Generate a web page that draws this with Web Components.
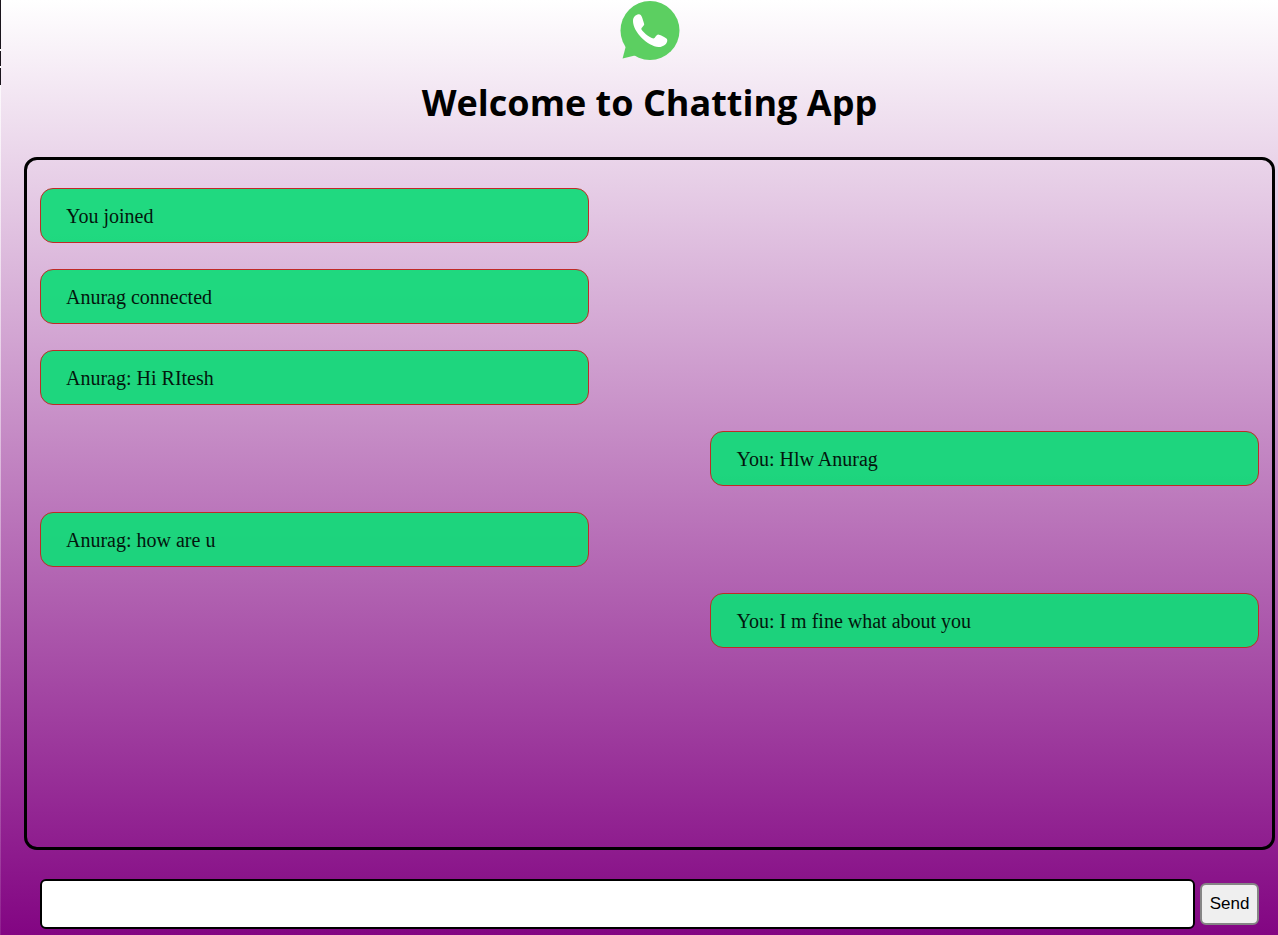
<!DOCTYPE html>
<html lang="en">
<head>
<meta charset="utf-8">
<title>Chatting App</title>
<style>
html { height: 100%; background: linear-gradient(#fff, #800080 102%) no-repeat; }
body { margin: 0; height: 100%; font-family: "Liberation Serif", serif; color: #000; }
</style>
</head>
<body>
<chat-app></chat-app>
<script>
const define = (name, markup, setup) => {
  const template = document.createElement('template');
  template.innerHTML = markup;
  customElements.define(name, class extends HTMLElement {
    constructor() {
      super();
      this.attachShadow({ mode: 'open' }).append(template.content.cloneNode(true));
      if (setup) setup(this.shadowRoot);
    }
  });
};

define('chat-header', `
<style>
:host { display: flex; flex-direction: column; align-items: center; }
svg { display: block; width: 60px; height: 60px; }
h1 { margin: 16px 0 0; font: bold 36px/54px "Open Sans", "Noto Sans", sans-serif; }
</style>
<svg viewBox="0 0 60 60" role="img" aria-label="Chat logo">
  <circle cx="30" cy="30.500" r="29.500" fill="#5ccf61"/>
  <path fill="#5ccf61" d="M2.600 58.500 6.400 44 17 55Z"/>
  <path fill="#fff" d="M13 21C13 17 15.800 14.500 18.500 14.200C20.500 14 21.500 15.500 22.300 18L24.200 24C24.600 25.500 21.300 27.500 21.300 29C21.300 30.500 29.500 38.300 33.500 38.400C35 38.400 36.200 34.400 38.200 34.400C39.500 34.400 46 37.700 47 38.900C48.500 42.700 44 47 38.500 47C28 46.500 13 32 13 21Z"/>
</svg>
<h1>Welcome to Chatting App</h1>`);

define('chat-message', `
<style>
:host {
  display: block; box-sizing: border-box; width: 45%; padding: 16px 25px 15px;
  border: 1px solid #c02a26; border-radius: 13px;
  background: rgba(19, 218, 121, .94); color: #03160d;
  font-size: 20px; line-height: 22px;
}
:host([side="right"]) { align-self: flex-end; }
</style>
<slot></slot>`);

define('chat-log', `
<style>
:host {
  display: flex; flex-direction: column; gap: 26px; box-sizing: border-box;
  padding: 28px 13px; border: 3px solid #000; border-radius: 13px; overflow: auto;
}
</style>
<slot></slot>`);

define('chat-composer', `
<style>
form { display: flex; align-items: center; gap: 5px; margin: 0; }
input {
  flex: 1; min-width: 0; box-sizing: border-box; height: 50px; padding: 0 12px;
  border: 2px solid #000; border-radius: 6px; background: #fff; font-size: 20px;
}
button {
  box-sizing: border-box; width: 59px; height: 42px; padding: 0; border: 2px solid #858585;
  border-radius: 6px; background: #efefef; color: #000;
  font: 17px "Liberation Sans", sans-serif;
}
</style>
<form>
  <input type="text" name="message" aria-label="Message" autocomplete="off">
  <button type="submit">Send</button>
</form>`, root => root.querySelector('form').addEventListener('submit', e => e.preventDefault()));

define('chat-app', `
<style>
:host { display: flex; flex-direction: column; box-sizing: border-box; height: 100vh; padding: 0 3px 6px 24px; position: relative; }
.edge {
  position: absolute; left: 0; top: 0; width: 1px; height: 100%;
  background: linear-gradient(#1a141c 49px, #fff 49px 51px, #1a141c 51px 66px, #fff 66px 68px, #1a141c 68px 85px, rgba(255,255,255,.7) 85px, rgba(255,255,255,.1));
}
chat-log { flex: 1; min-height: 0; margin-top: 27px; }
chat-composer { display: block; margin: 29px 16px 0; }
</style>
<div class="edge"></div>
<chat-header></chat-header>
<chat-log>
  <chat-message>You joined</chat-message>
  <chat-message>Anurag connected</chat-message>
  <chat-message>Anurag: Hi RItesh</chat-message>
  <chat-message side="right">You: Hlw Anurag</chat-message>
  <chat-message>Anurag: how are u</chat-message>
  <chat-message side="right">You: I m fine what about you</chat-message>
</chat-log>
<chat-composer></chat-composer>`);
</script>
</body>
</html>
